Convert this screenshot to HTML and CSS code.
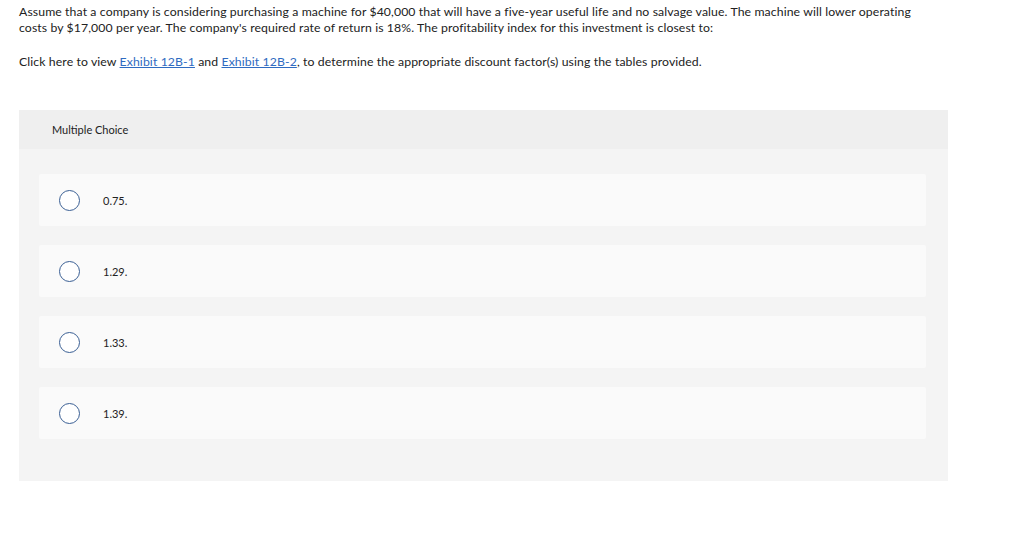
FILE: index.html
```html
<!DOCTYPE html>
<html>
<head>
<meta charset="utf-8">
<link rel="stylesheet" href="styles.css">
</head>
<body>
<div class="question">
  <p class="prompt">Assume that a company is considering purchasing a machine for $40,000 that will have a five-year useful life and no salvage value. The machine will lower operating costs by $17,000 per year. The company's required rate of return is 18%. The profitability index for this investment is closest to:</p>
  <p class="prompt">Click here to view <a href="#">Exhibit 12B-1</a> and <a href="#">Exhibit 12B-2</a>, to determine the appropriate discount factor(s) using the tables provided.</p>
</div>
<div class="panel">
  <div class="panel-head">Multiple Choice</div>
  <div class="choices">
    <div class="choice"><span class="radio"></span><span class="label">0.75.</span></div>
    <div class="choice"><span class="radio"></span><span class="label">1.29.</span></div>
    <div class="choice"><span class="radio"></span><span class="label">1.33.</span></div>
    <div class="choice"><span class="radio"></span><span class="label">1.39.</span></div>
  </div>
</div>
</body>
</html>
```
FILE: styles.css
```css
html, body { margin: 0; padding: 0; background: #fff; }
body {
  font-family: "Lato", "Liberation Sans", sans-serif;
  color: #222;
}
.question {
  padding: 4px 0 0 19px;
  width: 902px;
}
.prompt {
  margin: 0 0 18px 0;
  font-size: 12.25px;
  line-height: 16px;
  letter-spacing: 0.1px;
}
.prompt a { color: #2f6bc1; text-decoration: underline; }
.panel {
  margin: 40px 0 0 19px;
  width: 929px;
  background: #f4f4f4;
  padding-bottom: 42px;
}
.panel-head {
  height: 39px;
  background: #efefef;
  display: flex;
  align-items: center;
  padding-left: 33px;
  font-size: 11px;
  color: #222;
}
.choices {
  display: flex;
  flex-direction: column;
  gap: 19px;
  padding: 25px 22px 0 20px;
}
.choice {
  height: 52px;
  background: #fafafa;
  border-radius: 2px;
  display: flex;
  align-items: center;
  padding-left: 20px;
}
.radio {
  width: 21px;
  height: 21px;
  border: 1px solid #3a5f94;
  border-radius: 50%;
  background: #fff;
  box-sizing: border-box;
  flex: none;
}
.label {
  margin-left: 23px;
  font-size: 11px;
}
```
